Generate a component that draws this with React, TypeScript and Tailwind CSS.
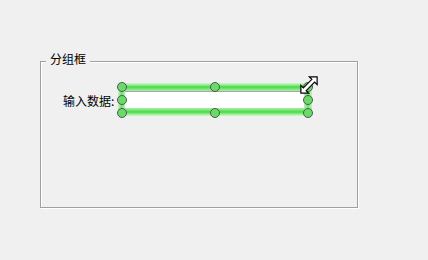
const handles = [
  'left-[-1px] top-[-1px]',
  'left-[92px] top-[-1px]',
  'left-[185px] top-[-1px]',
  'left-[-1px] top-[12px]',
  'left-[185px] top-[12px]',
  'left-[-1px] top-[25px]',
  'left-[92px] top-[25px]',
  'left-[185px] top-[25px]',
];

function ResizeCursor() {
  return (
    <svg
      width="24"
      height="24"
      viewBox="0 0 24 24"
      className="absolute left-[179px] top-[-10px]"
    >
      <g transform="rotate(-45 12 12)">
        <polygon
          points="0.5,12 6,6.5 6,10 18,10 18,6.5 23.5,12 18,17.5 18,14 6,14 6,17.5"
          fill="#fff"
          stroke="#000"
          strokeWidth="1.2"
          strokeLinejoin="miter"
        />
      </g>
    </svg>
  );
}

function SelectedEdit() {
  return (
    <div className="relative w-[194px] h-[33px]">
      <div className="h-[8px] bg-linear-to-b from-[#d2f7d2] via-[#3edc3e] to-[#a8eda8]" />
      <div className="flex h-[17px]">
        <div className="w-[7px] bg-linear-to-r from-[#c4f4c4] via-[#66e266] to-[#b6f0b6]" />
        <div className="flex-1 bg-white border-t border-[#a8a8a8]" />
        <div className="w-[8px] bg-linear-to-r from-[#b6f0b6] via-[#66e266] to-[#c4f4c4]" />
      </div>
      <div className="h-[8px] bg-linear-to-b from-[#a8eda8] via-[#3edc3e] to-[#d2f7d2]" />
      {handles.map((pos) => (
        <div
          key={pos}
          className={`absolute ${pos} w-[10px] h-[10px] rounded-full border border-[#555] bg-[#66de66]`}
        />
      ))}
      <ResizeCursor />
    </div>
  );
}

export default function App() {
  return (
    <div className="w-[428px] h-[260px] bg-[#f0f0f0] pt-[61px] pl-[40px] font-['Noto_Sans_CJK_SC','Noto_Sans',sans-serif] text-black">
      <div className="relative w-[318px] h-[147px] border border-[#a0a0a0] shadow-[1px_1px_0_#fff,inset_1px_1px_0_#fff]">
        <span className="absolute left-[5px] top-[-11px] px-[4px] bg-[#f0f0f0] text-[12px] leading-[16px]">
          分组框
        </span>
        <div className="flex items-start pt-[21px] pl-[22px]">
          <span className="w-[55px] mt-[10px] text-[12px] leading-[16px] whitespace-nowrap">输入数据:</span>
          <SelectedEdit />
        </div>
      </div>
    </div>
  );
}
